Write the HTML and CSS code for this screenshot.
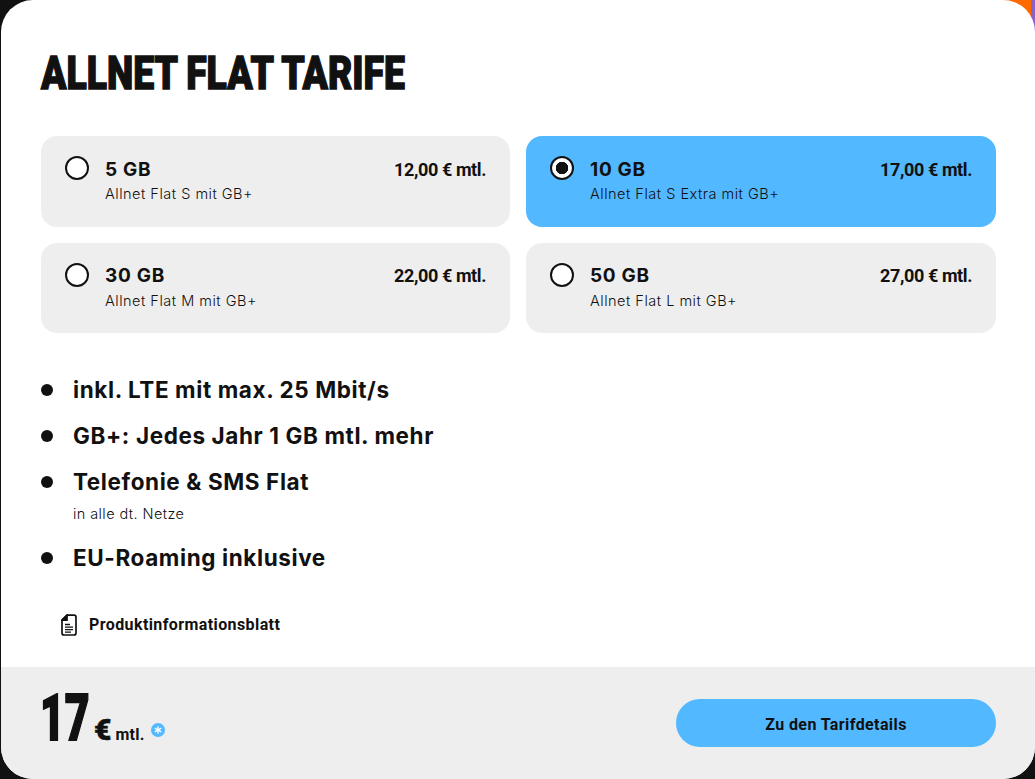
FILE: index.html
```html
<!DOCTYPE html>
<html lang="de">
<head>
<meta charset="utf-8">
<title>Allnet Flat Tarife</title>
<link rel="stylesheet" href="styles.css">
</head>
<body>
<div class="corner"></div>
<main class="card">
  <div class="content">
    <h1 class="title"><span class="squeeze">ALLNET FLAT TARIFE</span></h1>
    <div class="plans">
      <div class="plan">
        <span class="radio"></span>
        <div class="plan-text"><div class="plan-gb">5 GB</div><div class="plan-name">Allnet Flat S mit GB+</div></div>
        <div class="plan-price">12,00 € mtl.</div>
      </div>
      <div class="plan selected">
        <span class="radio checked"></span>
        <div class="plan-text"><div class="plan-gb">10 GB</div><div class="plan-name">Allnet Flat S Extra mit GB+</div></div>
        <div class="plan-price">17,00 € mtl.</div>
      </div>
      <div class="plan">
        <span class="radio"></span>
        <div class="plan-text"><div class="plan-gb">30 GB</div><div class="plan-name">Allnet Flat M mit GB+</div></div>
        <div class="plan-price">22,00 € mtl.</div>
      </div>
      <div class="plan">
        <span class="radio"></span>
        <div class="plan-text"><div class="plan-gb">50 GB</div><div class="plan-name">Allnet Flat L mit GB+</div></div>
        <div class="plan-price">27,00 € mtl.</div>
      </div>
    </div>
    <ul class="features">
      <li>inkl. LTE mit max. 25 Mbit/s</li>
      <li>GB+: Jedes Jahr 1 GB mtl. mehr</li>
      <li>Telefonie &amp; SMS Flat<small>in alle dt. Netze</small></li>
      <li>EU-Roaming inklusive</li>
    </ul>
    <a class="doc" href="#">
      <svg class="doc-icon" width="16" height="22" viewBox="0 0 16 22" fill="none" stroke="#111" stroke-width="1.7"><path d="M6 1.2H13a2 2 0 0 1 2 2V19a2 2 0 0 1-2 2H3a2 2 0 0 1-2-2V6.2Z" stroke-linejoin="round"/><path d="M6 1.2V6.2H1Z" fill="#111"/><path d="M4 10.5H9M4 13.2H12M4 15.7H12M4 18.2H10" stroke-width="1.3"/></svg>
      <span>Produktinformationsblatt</span>
    </a>
  </div>
  <footer class="footer">
    <div class="total">
      <span class="amount"><span class="squeeze-num">17</span></span>
      <span class="euro">€</span>
      <span class="mtl">mtl.</span>
      <svg class="star" width="14" height="14" viewBox="0 0 14 14"><circle cx="7" cy="7" r="7" fill="#52b8ff"/><path d="M7 3.2V10.8M3.7 5.1L10.3 8.9M3.7 8.9L10.3 5.1" stroke="#fff" stroke-width="1.3"/></svg>
    </div>
    <a class="cta" href="#">Zu den Tarifdetails</a>
  </footer>
</main>
</body>
</html>
```

FILE: styles.css
```css
* { box-sizing: border-box; }
html, body { height: 100%; }
body {
  margin: 0;
  background: #111;
  color: #111;
  font-family: "Inter", "Liberation Sans", sans-serif;
  overflow: hidden;
  position: relative;
  padding-left: 1px;
}
.corner {
  position: absolute;
  top: 0;
  right: 0;
  width: 60px;
  height: 40px;
  background: linear-gradient(90deg, #ff6a00 0 56px, #8a63c4 56px);
}
.card {
  position: relative;
  height: 779px;
  background: #fff;
  border-radius: 32px;
  overflow: hidden;
  display: flex;
  flex-direction: column;
}
.content { flex: 1; padding: 48px 40px 0; }
.title {
  margin: 0;
  height: 48px;
  font: 900 46px/48px "Roboto", sans-serif;
  white-space: nowrap;
  -webkit-text-stroke: 1.4px #111;
}
.squeeze { display: inline-block; position: relative; top: 1px; transform: scaleX(0.812); transform-origin: left center; }
.plans {
  display: grid;
  grid-template-columns: 469px 470px;
  grid-auto-rows: 90.5px;
  gap: 16px;
  margin-top: 40px;
}
.plan {
  display: flex;
  align-items: flex-start;
  padding: 20px 24px 0;
  background: #eee;
  border-radius: 16px;
}
.plan.selected { background: #52b8ff; }
.radio {
  flex: none;
  width: 24px;
  height: 24px;
  border: 2px solid #111;
  border-radius: 50%;
  background: #fff;
  margin-right: 16px;
}
.radio.checked { background: radial-gradient(circle, #111 0 6px, #fff 6.5px); }
.plan-text { flex: 1; }
.plan-gb { font: 700 19px/24px "Inter", sans-serif; letter-spacing: 0.7px; margin-top: 1.5px; }
.plan-name { font: 300 14.5px/20px "Inter", sans-serif; letter-spacing: 0.5px; margin-top: 2.5px; white-space: nowrap; }
.plan-price { font: 700 18px/24px "Roboto", sans-serif; margin-top: 1.5px; letter-spacing: -0.4px; white-space: nowrap; }
.features { list-style: none; margin: 42px 0 0; padding: 0; }
.features li {
  position: relative;
  padding-left: 32px;
  margin-bottom: 16px;
  font: 700 22.5px/30px "Inter", sans-serif;
  letter-spacing: 0.6px;
}
.features li::before {
  content: "";
  position: absolute;
  left: 0;
  top: 9px;
  width: 12px;
  height: 12px;
  border-radius: 50%;
  background: #111;
}
.features small { display: block; font: 300 14.5px/20px "Inter", sans-serif; letter-spacing: 0.4px; margin-top: 7px; padding-bottom: 3px; }
.doc {
  display: flex;
  align-items: center;
  gap: 12px;
  margin: 41px 0 0 20px;
  color: #111;
  text-decoration: none;
  font: 700 16px/22px "Roboto", sans-serif;
  letter-spacing: 0.4px;
}
.footer {
  flex: none;
  height: 112px;
  background: #eee;
  display: flex;
  align-items: center;
  justify-content: space-between;
  padding: 0 39px 0 40px;
}
.total { display: flex; align-items: baseline; height: 60px; margin-bottom: 8px; }
.amount { font: 900 64px/60px "Roboto", sans-serif; width: 53px; -webkit-text-stroke: 1.8px #111; }
.squeeze-num { display: inline-block; margin-left: -1px; transform: scaleX(0.67); transform-origin: left center; }
.euro { font: 900 30px/60px "Roboto", sans-serif; -webkit-text-stroke: 0.6px #111; }
.mtl { font: 700 16px/20px "Roboto", sans-serif; margin-left: 4px; letter-spacing: 0.3px; }
.star { align-self: flex-start; margin: 34px 0 0 6px; }
.cta {
  width: 320px;
  height: 48px;
  border-radius: 24px;
  background: #52b8ff;
  color: #111;
  text-decoration: none;
  text-align: center;
  font: 700 16px/51px "Roboto", sans-serif;
  letter-spacing: 0.4px;
}
```
